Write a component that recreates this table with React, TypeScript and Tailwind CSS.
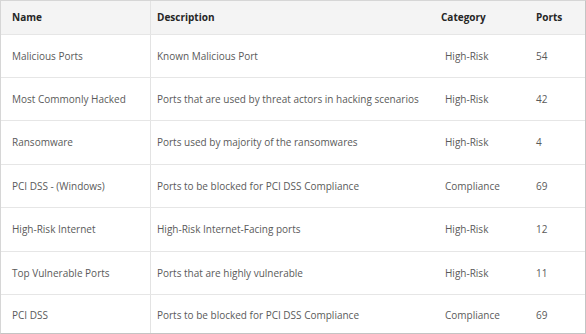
import React from "react";

const rows = [
  ["Malicious Ports", "Known Malicious Port", "High-Risk", "54", "h-[43px]"],
  ["Most Commonly Hacked", "Ports that are used by threat actors in hacking scenarios", "High-Risk", "42", "h-[43px]"],
  ["Ransomware", "Ports used by majority of the ransomwares", "High-Risk", "4", "h-[44px]"],
  ["PCI DSS - (Windows)", "Ports to be blocked for PCI DSS Compliance", "Compliance", "69", "h-[43px]"],
  ["High-Risk Internet", "High-Risk Internet-Facing ports", "High-Risk", "12", "h-[44px]"],
  ["Top Vulnerable Ports", "Ports that are highly vulnerable", "High-Risk", "11", "h-[43px]"],
  ["PCI DSS", "Ports to be blocked for PCI DSS Compliance", "Compliance", "69", "h-[40px]"],
];

export default function App() {
  return (
    <div
      className="w-[586px] h-[334px] bg-white border border-[#d6d6d6] border-r-[#c4c4c4] border-b-[#c4c4c4] overflow-hidden"
      style={{ fontFamily: '"Open Sans", "Liberation Sans", sans-serif' }}
    >
      <div className="grid grid-cols-[150px_278px_95px_1fr] h-[34px] bg-[#f4f4f4] border-b border-[#e6e6e6] text-[10px] font-bold text-[#262626] items-center">
        <div className="pl-[11px] h-full flex items-center border-r border-[#e3e3e3]">Name</div>
        <div className="pl-[6px] h-full flex items-center">Description</div>
        <div className="pl-[12px] h-full flex items-center">Category</div>
        <div className="pl-[12px] h-full flex items-center">Ports</div>
      </div>
      {rows.map((r, i) => (
        <div
          key={i}
          className={
            (i === rows.length - 1
              ? "grid grid-cols-[150px_278px_95px_1fr] text-[10px] text-[#5a5a5a] "
              : "grid grid-cols-[150px_278px_95px_1fr] border-b border-[#e6e6e6] text-[10px] text-[#5a5a5a] ") + r[4]
          }
        >
          <div className="pl-[11px] h-full flex items-center border-r border-[#e3e3e3]">{r[0]}</div>
          <div className="pl-[6px] h-full flex items-center whitespace-nowrap">{r[1]}</div>
          <div className="pl-[16px] h-full flex items-center">{r[2]}</div>
          <div className="pl-[12px] h-full flex items-center">{r[3]}</div>
        </div>
      ))}
    </div>
  );
}
